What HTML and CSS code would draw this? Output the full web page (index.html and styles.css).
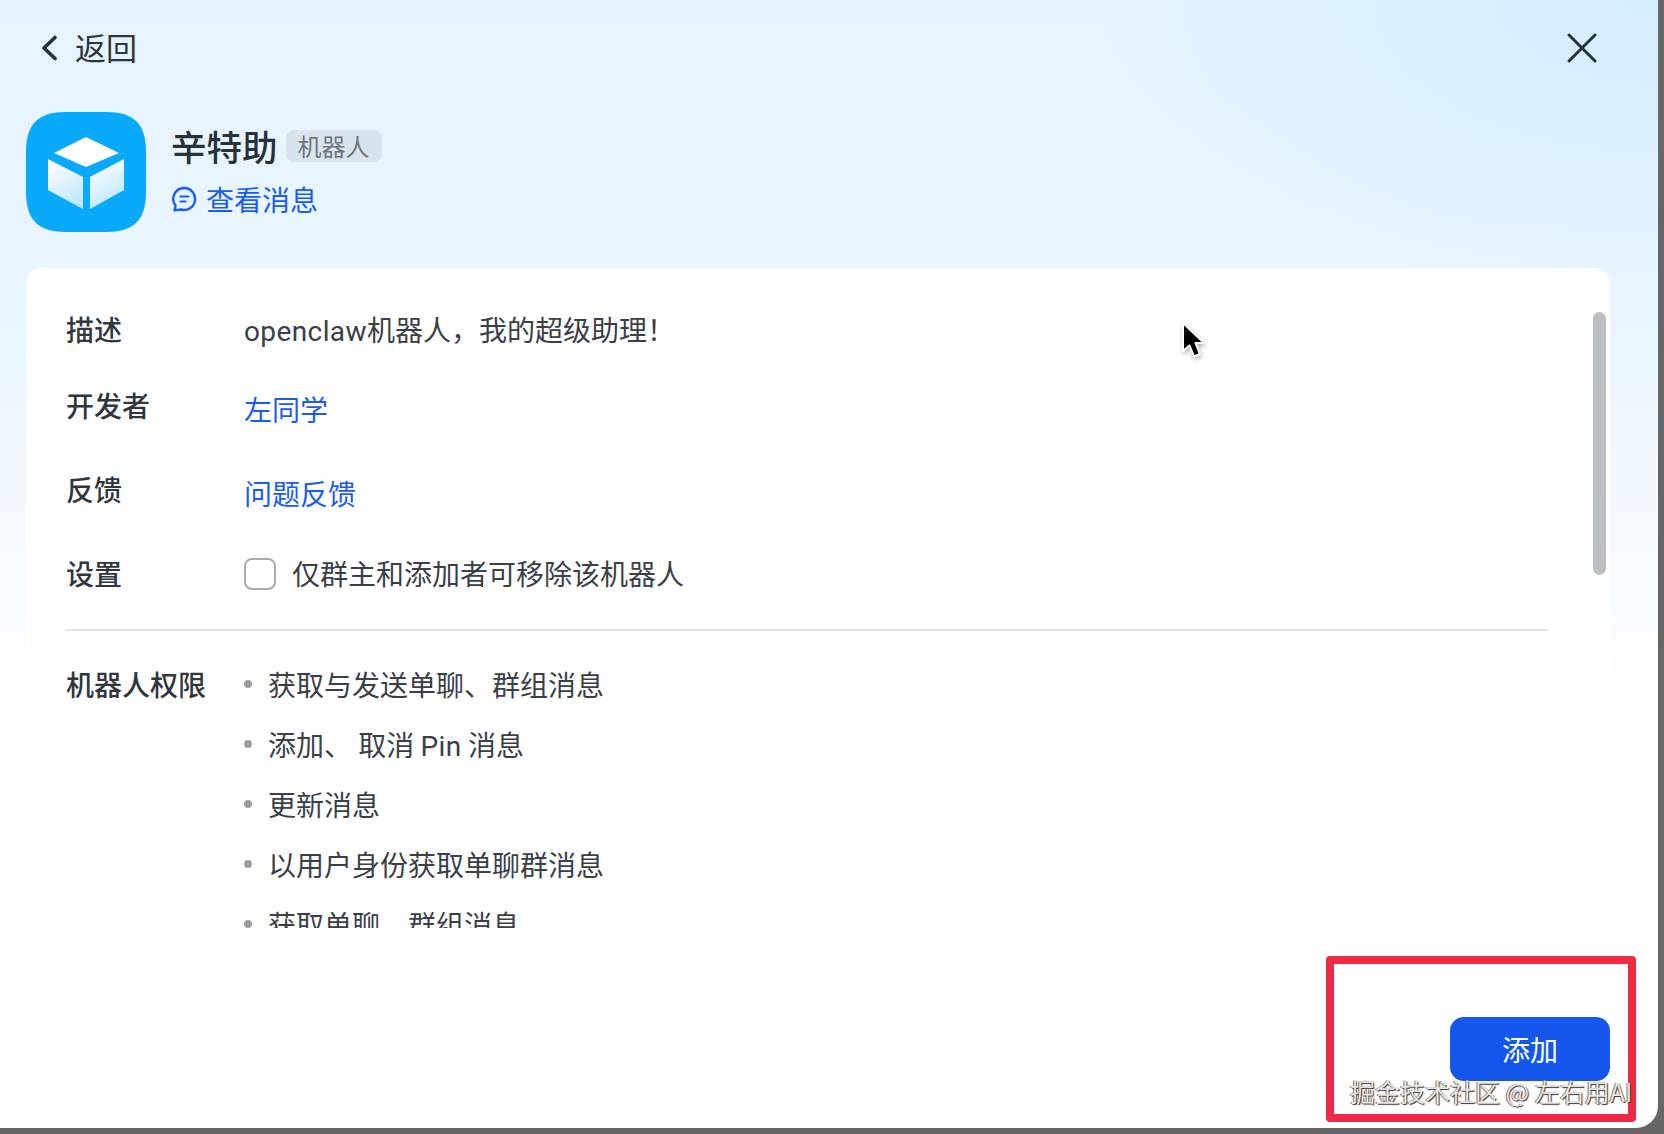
FILE: index.html
```html
<!DOCTYPE html>
<html lang="zh-CN">
<head>
<meta charset="utf-8">
<title>辛特助</title>
<link rel="stylesheet" href="styles.css">
</head>
<body>
<div class="window">
  <header class="topbar">
    <div class="back">
      <svg class="back-icon" width="16" height="26" viewBox="0 0 16 26"><path d="M14 2.5 3 13l11 10.5" fill="none" stroke="#25323c" stroke-width="3.6" stroke-linecap="round" stroke-linejoin="round"/></svg>
      <span>返回</span>
    </div>
    <svg class="close-icon" width="30" height="30" viewBox="0 0 30 30"><path d="M2 2 28 28M28 2 2 28" fill="none" stroke="#25323c" stroke-width="3" stroke-linecap="round"/></svg>
  </header>

  <section class="profile">
    <svg class="app-icon" width="120" height="120" viewBox="0 0 120 120">
      <defs>
        <linearGradient id="faceL" x1="0.2" y1="0" x2="0.6" y2="1"><stop offset="0" stop-color="#ffffff"/><stop offset="1" stop-color="#bfe7fa"/></linearGradient>
      </defs>
      <path d="M40 0H80C108 0 120 12 120 40V80C120 108 108 120 80 120H40C12 120 0 108 0 80V40C0 12 12 0 40 0Z" fill="#0aaafa"/>
      <path d="M60 25 93 41 60 55 28 41Z" fill="#fff"/>
      <path d="M22 47 57 65V97L22 78Z" fill="url(#faceL)"/>
      <path d="M64 65 98 47V78L64 97Z" fill="url(#faceL)"/>
    </svg>
    <div class="profile-text">
      <div class="name-row"><span class="name">辛特助</span><span class="tag">机器人</span></div>
      <div class="view-msg">
        <svg width="26" height="26" viewBox="0 0 26 26"><path d="M13 2a11 11 0 1 1-3.2 21.5L3.5 24.4 4.6 19.8A11 11 0 0 1 13 2Z" fill="none" stroke="#1a5cec" stroke-width="2.4" stroke-linejoin="round"/><path d="M9.5 10.5h8M9.5 15.5h5" fill="none" stroke="#1a5cec" stroke-width="2.2" stroke-linecap="round"/></svg>
        <span>查看消息</span>
      </div>
    </div>
  </section>

  <main class="card">
    <div class="scroll">
      <div class="row"><div class="label">描述</div><div class="value"><span class="latin">openclaw</span>机器人，我的超级助理！</div></div>
      <div class="row row-link"><div class="label">开发者</div><div class="value link">左同学</div></div>
      <div class="row row-link"><div class="label">反馈</div><div class="value link">问题反馈</div></div>
      <div class="row row-check"><div class="label">设置</div><div class="value check"><span class="box"></span><span>仅群主和添加者可移除该机器人</span></div></div>
      <div class="divider"></div>
      <div class="row row-perm">
        <div class="label">机器人权限</div>
        <ul class="perms">
          <li>获取与发送单聊、群组消息</li>
          <li>添加、 取消 <span class="latin">Pin</span> 消息</li>
          <li>更新消息</li>
          <li>以用户身份获取单聊群消息</li>
          <li>获取单聊、群组消息</li>
        </ul>
      </div>
      <div class="scrollbar"></div>
    </div>
  </main>

  <footer class="footer"><button class="add">添加</button></footer>

  <svg class="cursor" width="26" height="40" viewBox="0 0 26 40"><path d="M3 2V30L9.5 24.5 14 35.5 20 33 15.5 22H24Z" fill="#000" stroke="#fff" stroke-width="2" stroke-linejoin="round"/></svg>
  <div class="highlight"></div>
  <div class="watermark">掘金技术社区 @ 左右用AI</div>
</div>
</body>
</html>
```
FILE: styles.css
```css
* { box-sizing: border-box; }
html, body { margin: 0; height: 100%; }
body {
  background: #666;
  overflow: hidden;
  font-family: "Noto Sans CJK SC", "Noto Sans", sans-serif;
  color: #2b3238;
}
.latin { font-family: Roboto, "Noto Sans CJK SC", sans-serif; letter-spacing: 0.4px; line-height: 0; }
.window {
  position: relative;
  width: 1658px;
  height: 1128px;
  border-bottom-right-radius: 22px;
  overflow: hidden;
  background:
    radial-gradient(560px 300px at 100% 0, #d4edff 0, rgba(212,237,255,0) 100%),
    linear-gradient(180deg, #e6f4ff 0, #e9f5ff 300px, #ffffff 720px);
  padding: 0 48px 0 26px;
}
.topbar {
  height: 112px;
  display: flex;
  justify-content: space-between;
  align-items: flex-start;
  padding: 33px 13px 0 15px;
}
.back {
  display: flex;
  align-items: flex-start;
  gap: 18px;
  font-size: 31px;
  line-height: 28px;
  color: #2b3640;
}
.back-icon { margin-top: 2px; }
.profile { display: flex; gap: 26px; height: 156px; }
.app-icon { flex: none; }
.profile-text { padding-top: 16px; margin-left: -1px; }
.name-row { display: flex; align-items: center; gap: 8px; height: 36px; }
.name { font-size: 35.5px; line-height: 36px; font-weight: 500; color: #27313a; }
.tag {
  height: 32px;
  width: 96px;
  border-radius: 8px;
  background: #d9e3ec;
  color: #6d767e;
  font-size: 24px;
  line-height: 32px;
  text-align: center;
}
.view-msg {
  display: flex;
  align-items: center;
  gap: 9px;
  margin-top: 15px;
  font-size: 28px;
  line-height: 40px;
  color: #1a5cec;
}
.card {
  width: 1584px;
  height: 660px;
  background: #fff;
  border-radius: 16px 16px 0 0;
  overflow: hidden;
}
.scroll { position: relative; height: 660px; padding: 41px 40px 0; }
.row { display: flex; font-size: 28px; line-height: 40px; }
.row-link { margin-top: 36px; }
.row-link + .row-link { margin-top: 40px; }
.row-check { margin-top: 40px; }
.row-perm { margin-top: 33px; }
.label { width: 178px; flex: none; font-weight: 500; color: #30373d; white-space: nowrap; }
.value { color: #3a4046; }
.link { color: #1a5cec; padding-top: 4px; }
.check { display: flex; align-items: center; gap: 16px; }
.box {
  width: 32px;
  height: 32px;
  margin-top: 1px;
  border: 2px solid #a9adb1;
  border-radius: 8px;
  background: #fff;
}
.divider { height: 2px; margin: 36px 0 0; width: 1482px; background: #e2e4e6; }
.perms { list-style: none; margin: 0; padding: 0; color: #3a4046; }
.perms li {
  position: relative;
  padding-left: 24px;
  height: 40px;
  margin-bottom: 20px;
}
.perms li::before {
  content: "";
  position: absolute;
  left: 0;
  top: 16px;
  width: 8px;
  height: 8px;
  border-radius: 50%;
  background: #9a9ea2;
}
.scrollbar {
  position: absolute;
  left: 1567px;
  top: 44px;
  width: 13px;
  height: 263px;
  border-radius: 7px;
  background: #bcbfc1;
}
.footer { display: flex; justify-content: flex-end; padding-top: 89px; }
.add {
  width: 160px;
  height: 64px;
  border: 0;
  border-radius: 14px;
  background: #1557ec;
  color: #fff;
  font-family: inherit;
  font-size: 28px;
}
.cursor {
  position: absolute;
  left: 1180px;
  top: 321px;
  filter: drop-shadow(1px 2px 2px rgba(0,0,0,0.3));
}
.highlight {
  position: absolute;
  left: 1326px;
  top: 956px;
  width: 310px;
  height: 166px;
  border: 8px solid #ee2a46;
  border-radius: 4px;
}
.watermark {
  position: absolute;
  left: 1350px;
  top: 1074px;
  font-size: 25px;
  line-height: 34px;
  white-space: nowrap;
  color: #e6e6e6;
  text-shadow: 1px 1px 1px #333, -1px 0 0 #777;
}
```
